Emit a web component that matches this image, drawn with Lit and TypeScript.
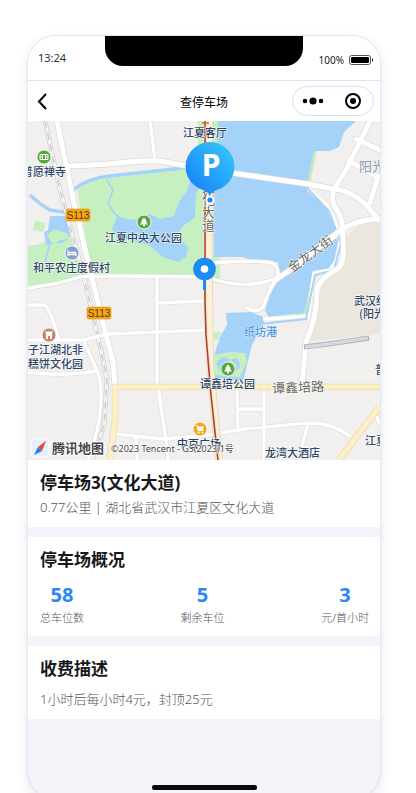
import { LitElement, html, css, svg } from "lit";
import { customElement } from "lit/decorators.js";

const roads = [
  "M28 288 Q60 284 80 277 Q90 275 206 277 Q232 286 252 284 Q275 282 290 270 L336 236",
  "M150 121 L155 160",
  "M28 305 H44 Q48 305 56 330 L59 340",
  "M28 340 H84 Q96 336 110 334 L158 332 L204 330",
  "M157 277 L157 380 L166 440 L168 460",
  "M157 303 L203 301",
  "M28 372 Q60 377 96 371",
  "M84 340 Q88 352 95 366 Q102 380 101 400 Q100 430 88 460",
  "M115 434 L163 439 L208 435 L245 429 L308 423 Q332 423 350 436",
  "M136 438 L137 460",
  "M237 385 L238 429",
  "M264 388 V460",
  "M240 409 H263",
  "M308 424 L302 446",
  "M376 416 L380 424",
  "M212 263 Q240 260 266 262 Q279 262 278 276",
  "M274 283 Q266 296 264 306 Q258 314 246 308",
];

const mainRoads = [
  "M57 121 L74 203 L90 270 L106 335 L113 362 L115 385",
  "M68 166 Q100 165 118 163 Q150 160 160 161 L198 168 L308 184 L334 189 Q360 192 378 220",
  "M370 121 Q356 150 346 170 L334 189 Q330 202 338 212 Q344 222 343 240 Q345 260 339 268 Q320 278 317 290 Q317 318 306 342 L302 385",
  "M356 139 L380 150",
  "M349 161 L378 177 L370 203",
  "M274 281 L290 270 Q320 246 342 229 Q362 218 381 219",
];

interface Label {
  x: number;
  y: number;
  text: string;
}

const labels: Label[] = [
  { x: 183, y: 137, text: "江夏客厅" },
  { x: 22, y: 176, text: "普愿禅寺" },
  { x: 105, y: 242, text: "江夏中央大公园" },
  { x: 33, y: 272, text: "和平农庄度假村" },
  { x: 28, y: 354, text: "子江湖北非" },
  { x: 28, y: 368, text: "糕饼文化园" },
  { x: 200, y: 388, text: "谭鑫培公园" },
  { x: 177, y: 448, text: "中百广场" },
  { x: 265, y: 457, text: "龙湾大酒店" },
  { x: 354, y: 305, text: "武汉纺织" },
  { x: 359, y: 318, text: "(阳光校区)" },
  { x: 375, y: 374, text: "普安" },
  { x: 365, y: 445, text: "江夏" },
];

const tree = (x: number, y: number) => svg`
  <g transform="translate(${x} ${y})">
    <circle r="7" fill="#5aa53c" stroke="#fff" stroke-width=".8"/>
    <path d="M0-4.6 L3-.6 H1.9 L4 2.4 H.8 V4.4 H-.8 V2.4 H-4 L-1.9-.6 H-3Z" fill="#fff"/>
  </g>`;

const shield = (x: number, y: number) => svg`
  <g>
    <rect x=${x} y=${y} width="24" height="12" rx="2" fill="#f6a519" stroke="#e5940d" stroke-width=".6"/>
    <text class="shield" x=${x + 12} y=${y + 10}>S113</text>
  </g>`;

@customElement("parking-map")
export class ParkingMap extends LitElement {
  static styles = css`
    :host { display: block; }
    svg { display: block; width: 100%; height: auto; }
    text { font-family: "Noto Sans", "Noto Sans CJK SC", sans-serif; }
    .label {
      font-size: 11px; font-weight: 500; fill: #2c4565; stroke: #fff;
      stroke-width: 1px; stroke-linejoin: round; paint-order: stroke;
      font-family: "Noto Sans CJK SC", sans-serif;
    }
    .casing { fill: none; stroke: #dcdbd9; stroke-linecap: round; stroke-linejoin: round; }
    .road { fill: none; stroke: #fff; stroke-linecap: round; stroke-linejoin: round; }
    .shield { font: 10px "Liberation Sans", sans-serif; fill: #5c3b08; text-anchor: middle; }
    .street { font-size: 13px; fill: #666; stroke: #fff; stroke-width: 1px; paint-order: stroke; }
    .water-name { font-size: 11px; fill: #3f8fd6; stroke: #d5eafc; stroke-width: 1px; paint-order: stroke; }
    .district { font-size: 13px; fill: #8d9db5; }
    .pin { font: bold 30px "Noto Sans", sans-serif; fill: #fff; text-anchor: middle; }
    .brand { font-size: 13px; font-weight: bold; fill: #46484c; stroke: #fff; stroke-width: 2px; paint-order: stroke; }
    .copy { font-size: 9px; fill: #444; stroke: #fff; stroke-width: 1px; paint-order: stroke; }
  `;

  render() {
    return html`
      <svg viewBox="28 121 352 339" role="img" aria-label="停车场位置地图">
        <defs>
          <linearGradient id="pin" x1="0" y1="1" x2="1" y2="0">
            <stop offset=".15" stop-color="#1b86fb"/>
            <stop offset="1" stop-color="#36ccf8"/>
          </linearGradient>
        </defs>
        <rect x="28" y="121" width="352" height="339" fill="#f1f0ee"/>
        <path d="M343 240 L346 262 L322 280 L317 318 L306 342 L380 334 V222 L362 222Z" fill="#ece7de"/>

        <path d="M198 121 H220 V279 H198Z M77 190 L90 180 L192 168 L208 169 V276 L93 278Z" fill="#c7f0c0"/>
        <path d="M28 246 L40 244 L52 237 L70 238 L78 255 L83 275 L60 284 L28 288Z M35 220 L46 223 L43 232 L33 230Z" fill="#c7f0c0"/>
        <path d="M50 216 H69 L72 236 L62 243 L46 245 L44 232 L48 230Z" fill="#a5d2f8"/>
        <path d="M47 235 L55 229 L66 233 L71 238 L60 240 L54 246Z" fill="#c7f0c0"/>
        <path d="M30 195 Q42 206 50 210 L70 213 M73 190 Q88 178 110 176 L192 167 M72 192 L74 216" fill="none" stroke="#a5d2f8" stroke-width="3.6"/>
        <path d="M107 180 L113 190 L108 204 L115 214 L122 219 M50 243 L45 262" fill="none" stroke="#a5d2f8" stroke-width="1.6"/>
        <path d="M117 217 L134 220 L150 214 L160 219 L174 216 L179 202 L187 190 L190 181 L202 172 L204 178 L196 194 L195 218 L184 225 L176 236 L188 247 L186 257 L178 262 L163 257 L150 246 L138 242 L118 237 L112 229Z" fill="#a5d2f8"/>

        <path d="M218 121 H356 L344 132 L339 147 L330 151 H316 L308 183 L309 190 L325 205 L333 222 L338 242 L334 262 L330 270 L315 271 L306 314 L270 320 L265 310 L271 292 L280 276 L278 262 L258 263 L243 257 H214 V180Z" fill="#a5d2f8"/>
        <path d="M226 313 L251 312 L266 318 L260 330 L252 345 L243 381 L210 377 L214 355 L220 337 L227 325Z" fill="#a5d2f8"/>
        <path d="M315 152 L309 182" stroke="#c2edb8" stroke-width="3"/>
        <path d="M312 278 L305 313 L272 317" fill="none" stroke="#c2edb8" stroke-width="1.6"/>
        <path d="M212 332 H221 L218 340 H211Z M213 355 L231 352 L245 353 L247 362 L240 377 L213 375 L211 361Z" fill="#c7f0c0"/>
        <path d="M216 364 Q222 353 230 360 Q240 355 240 367 Q234 375 222 374Z" fill="#a5d2f8"/>
        <path d="M221 366 L231 360 L237 366 L229 373Z" fill="#c7f0c0"/>
        <path d="M263 319 L308 316 L314 273 L330 270 L338 258 L341 235 L327 206 L308 189" fill="none" stroke="#fff" stroke-width="3.5"/>
        <path d="M260 324 L306 319 L315 275 L334 270 L341 244 L329 211 L307 188" fill="none" stroke="#a5d2f8" stroke-width="2"/>

        <path d="M45 121 L60 190 L84 277 L100 346 L107 380 L104 425 L92 460" fill="none" stroke="#cbcac8" stroke-width="4.6"/>
        <path d="M45 121 L60 190 L84 277 L100 346 L107 380 L104 425 L92 460" fill="none" stroke="#f5f4f3" stroke-width="3.4"/>
        <path d="M45 121 L60 190 L84 277 L100 346 L107 380 L104 425 L92 460" fill="none" stroke="#cbcac8" stroke-width="1.4" stroke-dasharray="7 5"/>

        ${roads.map((d) => svg`<path class="casing" stroke-width="4.6" d=${d}/>`)}
        ${mainRoads.map((d) => svg`<path class="casing" stroke-width="6.4" d=${d}/>`)}
        ${roads.map((d) => svg`<path class="road" stroke-width="3.4" d=${d}/>`)}
        ${mainRoads.map((d) => svg`<path class="road" stroke-width="5" d=${d}/>`)}

        <path d="M113 387 H380 M115 387 V420 L110 460 M380 406 L339 460" fill="none" stroke="#e4dcc4" stroke-width="6.6"/>
        <path d="M113 387 H380 M115 387 V420 L110 460 M380 406 L339 460" fill="none" stroke="#fdf1c4" stroke-width="5"/>
        <path d="M304 347 Q330 344 369 338" fill="none" stroke="#a9abb0" stroke-width="5"/>
        <path d="M305 347 Q330 344 368 338" fill="none" stroke="#d5d8dd" stroke-width="3.4"/>

        <path d="M209 121 V290 L210 365 L219 460" fill="none" stroke="#e8d8bf" stroke-width="8"/>
        <path d="M209 121 V290 L210 365 L219 460" fill="none" stroke="#fdf0d6" stroke-width="6"/>
        <path d="M205 121 V300 L206 335 L211 395 L218 460" fill="none" stroke="#f2e5dc" stroke-width="3.6"/>
        <path d="M205 121 V300 L206 335 L211 395 L218 460" fill="none" stroke="#b3441f" stroke-width="1.6"/>
        <path d="M202 123 H209" stroke="#e0672c" stroke-width="1.6"/>

        ${shield(66, 209)} ${shield(87, 307)}
        ${tree(144, 222)} ${tree(228, 369)}
        <g transform="translate(44 157)">
          <circle r="7" fill="#5aa53c" stroke="#fff" stroke-width=".8"/>
          <path d="M-4-2.5 H4 V2.5 H-4Z M-1.5-2.5 V2.5 M1.5-2.5 V2.5 M-4 0 H-2 M2 0 H4" fill="none" stroke="#fff"/>
        </g>
        <g transform="translate(72 253)">
          <circle r="7" fill="#7f9fd0" stroke="#fff" stroke-width=".8"/>
          <path d="M-4-3 V3 M-4 1.5 H4 V3 M-3-.5 H3.5 V1" fill="none" stroke="#fff" stroke-width="1.3"/>
        </g>
        <g transform="translate(49 335)">
          <circle r="7" fill="#c9826a" stroke="#fff" stroke-width=".8"/>
          <path d="M-4-3.5 H4 L3-1 V4 H1 V1 H-1 V4 H-3 V-1Z" fill="#fff"/>
        </g>
        <g transform="translate(200 429)">
          <circle r="7" fill="#f5a623" stroke="#fff" stroke-width=".8"/>
          <path d="M-4.5-3.5 H-3 L-2 1.5 H3" fill="none" stroke="#fff"/>
          <path d="M-2.8-2.5 H4 L3 .8 H-2Z" fill="#fff"/>
          <circle cx="-1.4" cy="3.4" r="1" fill="#fff"/><circle cx="2.4" cy="3.4" r="1" fill="#fff"/>
        </g>

        ${labels.map((l) => svg`<text class="label" x=${l.x} y=${l.y}>${l.text}</text>`)}
        <text class="district" x="359" y="171">阳光</text>
        <text class="water-name" x="244" y="336">纸坊港</text>
        <text class="street" x="272" y="392" transform="rotate(-2 298 388)">谭鑫培路</text>
        <text class="street" x="292" y="273" transform="rotate(-36 292 273)">金龙大街</text>
        ${["文", "化", "大", "道"].map(
          (c, i) => svg`<text class="street" x="202" y=${191 + i * 13}>${c}</text>`,
        )}

        <path d="M210 195 Q207 191 199 188.500 A24.500 24.500 0 1 1 221 188.500 Q213 191 210 195Z" fill="url(#pin)"/>
        <text class="pin" x="211" y="176">P</text>
        <circle cx="210" cy="200" r="3.600" fill="#1787f5" stroke="#fff" stroke-width="2"/>
        <path d="M204.500 276 V290" stroke="#1b8bf5" stroke-width="3"/>
        <circle cx="204.500" cy="269" r="11.300" fill="#1b8bf5"/>
        <circle cx="204.500" cy="269" r="3.800" fill="#fff"/>

        <g transform="translate(40 448)">
          <rect x="-9" y="-9" width="18" height="18" rx="4" fill="#e6effb" stroke="#fff"/>
          <path d="M6-7 L2 3 L-2-1Z" fill="#e5483c"/>
          <path d="M-6 7 L-2-1 L2 3Z" fill="#2878e6"/>
        </g>
        <text class="brand" x="52" y="453">腾讯地图</text>
        <text class="copy" x="111" y="452">©2023 Tencent - GS(2023)1号</text>
      </svg>
    `;
  }
}

@customElement("app-root")
export class AppRoot extends LitElement {
  static styles = css`
    :host {
      display: block; box-sizing: border-box; height: 100vh; overflow: hidden;
      padding: 36px 36px 0 28px; background: #fff; color: #17191c;
      font-family: "Noto Sans", "Noto Sans CJK SC", sans-serif;
    }
    .phone {
      display: flex; flex-direction: column; min-height: 763px; overflow: hidden;
      border-radius: 28px; background: #f4f5fa;
      box-shadow: 0 0 0 1px #e3e6f2, 0 4px 12px rgba(60, 80, 130, .16);
    }
    .status {
      display: grid; grid-template-columns: 1fr 56% 1fr; height: 44px;
      background: #fff; border-bottom: 1px solid #d7e4f4;
    }
    .time { padding: 14px 0 0 10px; font-size: 11px; line-height: 16px; color: #333; }
    .notch { height: 30px; border-radius: 0 0 18px 18px; background: #000; }
    .power {
      display: flex; justify-content: flex-end; align-items: center; gap: 5px;
      height: 16px; padding: 16px 6px 0 0; font-size: 10px; color: #222;
    }
    .nav {
      display: grid; grid-template-columns: 1fr auto 1fr; align-items: center;
      height: 40px; padding: 0 6px; background: #fff;
    }
    button { margin: 0; padding: 0; border: 0; background: none; color: #000; }
    .back { justify-self: start; width: 16px; height: 24px; }
    .nav h1 { margin: 0; padding-top: 4px; font-size: 12px; font-weight: 400; line-height: 20px; color: #000; }
    .capsule {
      display: flex; justify-self: end; align-items: center; justify-content: space-around;
      box-sizing: border-box; width: 82px; height: 30px;
      border: 1px solid #d9dfee; border-radius: 15px;
    }
    .capsule button { width: 38px; height: 24px; }
    svg { display: block; margin: auto; }
    .power svg { margin: 0; }
    .cards { display: flex; flex-direction: column; gap: 10px; }
    .card { padding: 11px 11px 8px 12px; background: #fff; }
    h2 { margin: 0; font-size: 17px; font-weight: 700; line-height: 24px; }
    p { margin: 0; font-size: 13px; font-weight: 300; line-height: 24px; color: #555; }
    .fee { margin-top: 6px; }
    .stats { display: flex; justify-content: space-between; margin: 8px 0 2px; }
    .stat { display: flex; flex-direction: column; align-items: center; }
    dt { order: 1; font-size: 11px; font-weight: 300; line-height: 16px; color: #555; }
    dd { margin: 0; font-size: 20px; font-weight: 700; line-height: 30px; color: #2b87f3; }
    .home { width: 105px; height: 5px; margin: auto auto 9px; border-radius: 2px; background: #0b0b0b; }
  `;

  private stats = [
    { name: "总车位数", value: 58 },
    { name: "剩余车位", value: 5 },
    { name: "元/首小时", value: 3 },
  ];

  render() {
    return html`
      <main class="phone">
        <header>
          <div class="status">
            <span class="time">13:24</span>
            <span class="notch"></span>
            <span class="power">
              100%
              <svg width="25" height="10" viewBox="0 0 25 10">
                <rect x=".5" y=".5" width="21" height="9" rx="2" fill="none" stroke="#555"/>
                <rect x="2" y="2" width="18" height="6" rx="1"/>
                <path d="M23 3 Q25 5 23 7Z"/>
              </svg>
            </span>
          </div>
          <nav class="nav">
            <button class="back" aria-label="返回">
              <svg width="16" height="18" viewBox="0 0 16 18">
                <path d="M12 2 L5 9.500 L12 17" fill="none" stroke="#000" stroke-width="2"/>
              </svg>
            </button>
            <h1>查停车场</h1>
            <div class="capsule">
              <button aria-label="更多">
                <svg width="22" height="8" viewBox="0 0 22 8">
                  <circle cx="3" cy="4" r="2.300"/><circle cx="11" cy="4" r="3.600"/><circle cx="19" cy="4" r="2.300"/>
                </svg>
              </button>
              <button aria-label="关闭">
                <svg width="16" height="16" viewBox="0 0 16 16">
                  <circle cx="8" cy="8" r="7" fill="none" stroke="#000" stroke-width="2"/>
                  <circle cx="8" cy="8" r="3"/>
                </svg>
              </button>
            </div>
          </nav>
        </header>
        <parking-map></parking-map>
        <div class="cards">
          <section class="card">
            <h2>停车场3(文化大道)</h2>
            <p>0.77公里 | 湖北省武汉市江夏区文化大道</p>
          </section>
          <section class="card">
            <h2>停车场概况</h2>
            <dl class="stats">
              ${this.stats.map(
                (s) => html`<div class="stat"><dt>${s.name}</dt><dd>${s.value}</dd></div>`,
              )}
            </dl>
          </section>
          <section class="card">
            <h2>收费描述</h2>
            <p class="fee">1小时后每小时4元，封顶25元</p>
          </section>
        </div>
        <div class="home"></div>
      </main>
    `;
  }
}
